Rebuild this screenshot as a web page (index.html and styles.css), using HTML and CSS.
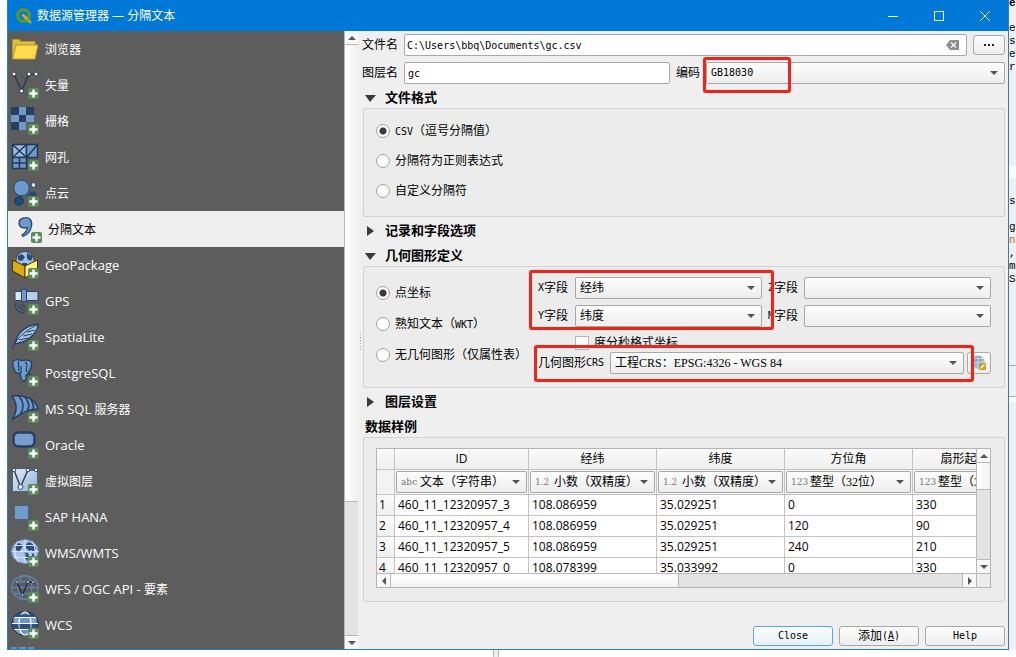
FILE: index.html
```html
<!DOCTYPE html>
<html lang="zh-CN">
<head>
<meta charset="utf-8">
<title>数据源管理器 — 分隔文本</title>
<link rel="stylesheet" href="styles.css">
</head>
<body>
<svg class="defs" aria-hidden="true">
  <defs>
    <linearGradient id="pale" x1="0" y1="0" x2="1" y2="1"><stop offset="0" stop-color="#e6edf5"/><stop offset="1" stop-color="#8fb0d6"/></linearGradient>
    <symbol id="plus" viewBox="0 0 11 11"><rect width="11" height="11" rx="2" fill="#588b58"/><path d="M5.5 1.5v8M1.500 5.500h8" stroke="#fff" stroke-width="2.400"/></symbol>
  </defs>
</svg>
<div class="desktop">
  <section class="window">
    <header class="titlebar">
      <svg class="logo" viewBox="0 0 16 16"><circle cx="7.500" cy="7.500" r="5.700" fill="none" stroke="#589632" stroke-width="3.400"/><path d="M9 9l6 6" stroke="#93b023" stroke-width="3"/><path d="M6.500 6.500l4 4" stroke="#ee9b3a" stroke-width="2.600"/></svg>
      <h1>数据源管理器 — 分隔文本</h1>
      <button class="winbtn" aria-label="最小化"><svg viewBox="0 0 10 10"><path d="M0 5.500h10"/></svg></button>
      <button class="winbtn" aria-label="最大化"><svg viewBox="0 0 10 10"><path d="M.5.5h9v9h-9z"/></svg></button>
      <button class="winbtn" aria-label="关闭"><svg viewBox="0 0 10 10"><path d="M0 0l10 10M10 0L0 10"/></svg></button>
    </header>
    <div class="content">
      <nav class="sidebar">
        <button class="item zh"><svg viewBox="0 0 28 28"><path d="M1.500 23V4.500h7l1.500 2h14v4" fill="#e0bd3a" stroke="#b8962a"/><path d="M1.500 24L5 10h22l-3 14z" fill="#ffda4f" stroke="#b8962a"/></svg><span>浏览器</span></button>
        <button class="item zh"><svg viewBox="0 0 28 28"><path d="M3 3l7.500 17L18 3h7" fill="none" stroke="#2b3c52" stroke-width="1.600"/><g fill="#fff" stroke="#2b3c52"><circle cx="3" cy="3" r="2"/><circle cx="10.500" cy="20" r="2"/><circle cx="18" cy="3" r="2"/><circle cx="25" cy="3" r="2"/></g><use href="#plus" x="17" y="17" width="11" height="11"/></svg><span>矢量</span></button>
        <button class="item zh"><svg viewBox="0 0 28 28"><path d="M0 0h23v23H0z" fill="#253f5c"/><path d="M8 0h7v8H8zM0 8h8v7H0zM15 8h8v7h-8zM8 15h7v8H8z" fill="#7098c8"/><path d="M15 15h8v8h-8z" fill="#5d5d5d"/><use href="#plus" x="17" y="17" width="11" height="11"/></svg><span>栅格</span></button>
        <button class="item zh"><svg viewBox="0 0 28 28"><g stroke="#1e3a59" stroke-width="1.500"><path d="M1.500 1.500h14v13h-14z" fill="#9dbbe0"/><path d="M15.500 1.500h11v13h-11z" fill="#7098c8"/><path d="M1.500 14.500h14v11h-14zM1.500 20h14M8.500 14.500v11" fill="#7098c8"/><path d="M1.500 1.500l14 13m0-13l-14 13m14 0L26.500 1.500" fill="none"/></g><use href="#plus" x="17" y="17" width="11" height="11"/></svg><span>网孔</span></button>
        <button class="item zh"><svg viewBox="0 0 28 28"><circle cx="10.500" cy="9" r="7.800" fill="#6e99cd" stroke="#294669"/><circle cx="22.500" cy="6" r="2.400" fill="#d7e3f0" stroke="#294669"/><circle cx="8" cy="22" r="4.300" fill="#254977" stroke="#1b3558"/><circle cx="21.500" cy="17" r="4.500" fill="#254977"/><use href="#plus" x="17" y="17" width="11" height="11"/></svg><span>点云</span></button>
        <button class="item zh selected"><svg viewBox="0 0 28 28"><path d="M10 3c5-1.500 8.500 2 7.500 8-.8 5-4 8.500-8.500 10.500l-1-1.500c3-2 5-4.500 5.500-7.500C9 14 5 12 5 8c0-2.500 2-4.500 5-5z" fill="#6e99cd" stroke="#294669" stroke-width="1.300"/><use href="#plus" x="17" y="17" width="11" height="11"/></svg><span>分隔文本</span></button>
        <button class="item"><svg viewBox="0 0 28 28"><path d="M14 3L26.500 8v12L14 27 1.500 20V8z" fill="#8a6a08"/><circle cx="14" cy="9.500" r="9" fill="#a5c2e6" stroke="#294669"/><path d="M7 5l4-2 3 3-3 4-4-1zM16 2l6 3-2 5-4-2zM11 12h5v4h-4z" fill="#254977"/><path d="M1.500 9L14 15v12L1.500 20z" fill="#d9ab0f" stroke="#3d3204"/><path d="M26.500 9L14 15v12l12.500-7z" fill="#fdf37d" stroke="#3d3204"/><use href="#plus" x="17" y="17" width="11" height="11"/></svg><span>GeoPackage</span></button>
        <button class="item"><svg viewBox="0 0 28 28"><g stroke="#294669"><path d="M4 4.500h8v9H4z" fill="#dce7f4"/><path d="M15 4.500h12v9H15z" fill="#b5cdea"/><path d="M10.500 2.500h5v12h-5z" fill="#6e99cd"/></g><path d="M3.500 16c0 6 3.500 9.500 10 10M7 16c.5 4 3 6.500 7 7M10.500 16c.5 2 1.500 3.500 4 4" fill="none" stroke="#34486a" stroke-width="1.400"/><use href="#plus" x="17" y="17" width="11" height="11"/></svg><span>GPS</span></button>
        <button class="item"><svg viewBox="0 0 28 28"><path d="M4 21C6 10 15 2 27 1c0 8-9 17-19 19z" fill="#a9c4e4" stroke="#203f63" stroke-width="1.300"/><path d="M1 27c2-8 10-18 25-25M8 17l9-2M12 13l9-2M16 9l8-2" fill="none" stroke="#203f63"/><use href="#plus" x="17" y="17" width="11" height="11"/></svg><span>SpatiaLite</span></button>
        <button class="item"><svg viewBox="0 0 28 28"><path d="M3 1.500c4-2 6 0 7.500 0s7-1.500 9.500 1c1.500 4-1 9-3 11.500l2 1-4 1v4c-1 3-5 2-5-1l-1-5c-4 1-5-1-6-4-1.500-4-2-7 0-8.500z" fill="#6e99cd" stroke="#203f63" stroke-width="1.300"/><path d="M8 2c-2 3 1 6-.5 10M14.500 3c3 3 0 6 1 10M10 7v7" fill="none" stroke="#203f63" stroke-width="1.200"/><use href="#plus" x="17" y="17" width="11" height="11"/></svg><span>PostgreSQL</span></button>
        <button class="item"><svg viewBox="0 0 28 28"><path d="M1 1c12-1 24 2 26 13-10 0-17 4-26 11C7 16 6 8 1 1z" fill="#6e99cd" stroke="#203f63" stroke-width="1.400"/><path d="M8 1c5 6 5 13 1 19M14 2c4 5 5 10 2 14.500M20 5c2 3 3 7 2 9.500" fill="none" stroke="#203f63" stroke-width="1.600"/><use href="#plus" x="17" y="17" width="11" height="11"/></svg><span>MS SQL <small>服务器</small></span></button>
        <button class="item"><svg viewBox="0 0 28 28"><rect x="2.500" y="1.500" width="21" height="14" rx="5" fill="#7a9dd0" stroke="#253f66" stroke-width="2.400"/><use href="#plus" x="17" y="17" width="11" height="11"/></svg><span>Oracle</span></button>
        <button class="item zh"><svg viewBox="0 0 28 28"><path d="M1.500 1.500h25v23h-25z" fill="url(#pale)" stroke="#47627f"/><path d="M3 3l6.500 17L17 3h8" fill="none" stroke="#294669" stroke-width="1.500"/><g fill="#fff" stroke="#294669"><circle cx="3" cy="3" r="1.800"/><circle cx="9.500" cy="20" r="2.400"/><circle cx="17" cy="3" r="1.800"/><circle cx="25" cy="3" r="1.800"/></g><use href="#plus" x="17" y="17" width="11" height="11"/></svg><span>虚拟图层</span></button>
        <button class="item"><svg viewBox="0 0 28 28"><path d="M1 1h19v19H1z" fill="none" stroke="#465e7c" stroke-width="1.500" stroke-dasharray="2 2"/><path d="M4 3h13v13H4z" fill="#6e9ccf"/><use href="#plus" x="17" y="17" width="11" height="11"/></svg><span>SAP HANA</span></button>
        <button class="item"><svg viewBox="0 0 28 28"><ellipse cx="14" cy="12.500" rx="13.500" ry="12" fill="#a9c6e9" stroke="#5f82ac"/><path d="M3 8l4-4 3 1 2 2-2 3-2 3-3-2zM15 5l3-2 4 2 3 4-2 4-3-2-2 1-3-3zM13 13l4 1 1 3-2 5-2-2zM21 15l3-1-1 4-2 1z" fill="#2c4d77"/><path d="M.5 12.500h27M14 .5v24M7 2c-4 7-4 14 0 21M21 2c4 7 4 14 0 21M3 6.500h22M3 18.500h22" fill="none" stroke="#dce9f7" stroke-width=".9"/><use href="#plus" x="17" y="17" width="11" height="11"/></svg><span>WMS/WMTS</span></button>
        <button class="item"><svg viewBox="0 0 28 28"><g fill="none" stroke="#6184ad" stroke-width="1.300"><ellipse cx="14" cy="12.500" rx="13.200" ry="12"/><ellipse cx="14" cy="12.500" rx="7" ry="12"/><path d="M1 12.500h26M3 6.500h22M3 18.500h22"/></g><path d="M6 7l5.500 13L17 7h5" fill="none" stroke="#1e2d40" stroke-width="1.300"/><g fill="#dce7f4" stroke="#1e2d40" stroke-width=".8"><circle cx="6" cy="7" r="1.400"/><circle cx="11.500" cy="20" r="1.400"/><circle cx="17" cy="7" r="1.400"/><circle cx="22" cy="7" r="1.400"/></g><use href="#plus" x="17" y="17" width="11" height="11"/></svg><span>WFS / OGC API - <small>要素</small></span></button>
        <button class="item"><svg viewBox="0 0 28 28"><ellipse cx="14" cy="12.500" rx="13.200" ry="12" fill="#2d5080" stroke="#1b3556"/><path d="M2.500 7h23v5.500h-23zM3 18h22l-5 5H8z" fill="#7ba3d3"/><ellipse cx="14" cy="12.500" rx="6" ry="11.500" fill="#6d96c8" stroke="#fff" stroke-width="1.200"/><path d="M8.500 13h11v5h-11zM9.500 3.500h9l1 2.500h-11z" fill="#2d5080"/><path d="M1 12.500h26M3 6.500h22M3 18.500h22" stroke="#fff" stroke-width="1.200"/><use href="#plus" x="17" y="17" width="11" height="11"/></svg><span>WCS</span></button>
        <button class="item" aria-label="XYZ"><svg viewBox="0 0 28 28"><path d="M0 0h6v6H0zM8 0h7v6H8zM17 0h6v6h-6z" fill="#5b93cf"/></svg></button>
      </nav>
      <div class="vscroll side-scroll"><i class="up"></i><b></b><i class="down"></i></div>
      <form class="panel">
        <div class="row">
          <label for="file">文件名</label>
          <div class="clearable"><input id="file" class="field mono" value="C:\Users\bbq\Documents\gc.csv"><button type="button" aria-label="清除"><svg viewBox="0 0 13 10"><path d="M4 0h9v10H4L0 5z" fill="#8f8f8f"/><path d="M5 2.500l5 5m0-5l-5 5" stroke="#fff" stroke-width="1.200"/></svg></button></div>
          <button type="button" class="btn browse" aria-label="浏览"><i></i><i></i><i></i></button>
        </div>
        <div class="row names">
          <label for="layer">图层名</label>
          <input id="layer" class="field mono" value="gc">
          <label for="enc">编码</label>
          <div class="combo"><select id="enc" class="field mono"><option>GB18030</option></select><em class="mark mark-enc"></em></div>
        </div>

        <h2 class="open">文件格式</h2>
        <fieldset class="formats">
          <label><input type="radio" name="fmt" checked><span><span class="mono">CSV</span>（逗号分隔值）</span></label>
          <label><input type="radio" name="fmt">分隔符为正则表达式</label>
          <label><input type="radio" name="fmt">自定义分隔符</label>
        </fieldset>
        <h2>记录和字段选项</h2>
        <h2 class="open">几何图形定义</h2>
        <fieldset class="geometry">
          <div class="kinds">
            <label><input type="radio" name="geom" checked>点坐标</label>
            <label><input type="radio" name="geom"><span>熟知文本（<span class="mono">WKT</span>）</span></label>
            <label><input type="radio" name="geom">无几何图形（仅属性表）</label>
          </div>
          <div class="coords">
            <div class="axes">
              <label for="xf"><span class="mono">X</span>字段</label><div class="combo"><select id="xf" class="field"><option>经纬</option></select></div>
              <label for="zf"><span class="mono">Z</span>字段</label><div class="combo"><select id="zf" class="field"><option></option></select></div>
              <label for="yf"><span class="mono">Y</span>字段</label><div class="combo"><select id="yf" class="field"><option>纬度</option></select></div>
              <label for="mf"><span class="mono">M</span>字段</label><div class="combo"><select id="mf" class="field"><option></option></select></div>
              <em class="mark mark-xy"></em>
            </div>
            <label class="dms"><input type="checkbox">度分秒格式坐标</label>
            <div class="crs">
              <label for="crs">几何图形<span class="mono">CRS</span></label>
              <div class="combo"><select id="crs" class="field"><option>工程CRS：EPSG:4326 - WGS 84</option></select></div>
              <button type="button" class="btn" aria-label="选择CRS"><svg viewBox="0 0 16 16"><circle cx="7" cy="7" r="6.500" fill="#8fa3b5"/><path d="M.5 7h13A6.500 6.500 0 0 1 .5 7z" fill="#8dbfe8"/><path d="M1 7h13M7 .5v13M2 3.500h10M3.500 2c-2 4-2 7 0 10M10.500 2c2 4 2 7 0 10" fill="none" stroke="#d5dde5" stroke-width=".8"/><rect x="8" y="8" width="7" height="7" rx="1" fill="#c5a31c"/><path d="M9.500 13.500l4-4" stroke="#fff" stroke-width="1.500"/></svg></button>
              <em class="mark mark-crs"></em>
            </div>
          </div>
        </fieldset>
        <h2>图层设置</h2>
        <h2 class="plain">数据样例</h2>
        <fieldset class="sample">
          <div class="frame">
            <div class="viewport">
              <table>
                <colgroup><col class="c-num"><col class="c-id"><col><col><col><col></colgroup>
                <thead>
                  <tr><th></th><th>ID</th><th>经纬</th><th>纬度</th><th>方位角</th><th>扇形起始角度</th></tr>
                  <tr class="types"><th></th>
                    <td><div class="combo"><i>abc</i><select class="field" aria-label="ID 类型"><option>文本（字符串）</option></select></div></td>
                    <td><div class="combo"><i>1.2</i><select class="field" aria-label="经纬 类型"><option>小数（双精度）</option></select></div></td>
                    <td><div class="combo"><i>1.2</i><select class="field" aria-label="纬度 类型"><option>小数（双精度）</option></select></div></td>
                    <td><div class="combo"><i>123</i><select class="field" aria-label="方位角 类型"><option>整型（32位）</option></select></div></td>
                    <td><div class="combo"><i>123</i><select class="field" aria-label="扇形 类型"><option>整型（32位）</option></select></div></td></tr>
                </thead>
                <tbody>
                  <tr><th>1</th><td>460_11_12320957_3</td><td>108.086959</td><td>35.029251</td><td>0</td><td>330</td></tr>
                  <tr><th>2</th><td>460_11_12320957_4</td><td>108.086959</td><td>35.029251</td><td>120</td><td>90</td></tr>
                  <tr><th>3</th><td>460_11_12320957_5</td><td>108.086959</td><td>35.029251</td><td>240</td><td>210</td></tr>
                  <tr><th>4</th><td>460_11_12320957_0</td><td>108.078399</td><td>35.033992</td><td>0</td><td>330</td></tr>
                </tbody>
              </table>
            </div>
            <div class="vscroll"><i class="up"></i><b></b><i class="down"></i></div>
            <div class="hscroll"><i class="left"></i><b></b><i class="right"></i></div>
            <div class="corner"></div>
          </div>
        </fieldset>
        <footer>
          <button type="button" class="btn default mono">Close</button>
          <button type="button" class="btn">添加<span class="mono">(<u>A</u>)</span></button>
          <button type="button" class="btn mono">Help</button>
        </footer>
      </form>
    </div>
  </section>
  <aside class="behind"><p class="first">e</p><p class="code">
e:
s
e
r</p><p class="gap"></p><p class="code second">sI

g
<span>n</span>
,
m
S</p><p class="tab"></p><p class="rest"></p></aside>
</div>
<div class="below"><i></i></div>
</body>
</html>
```

FILE: styles.css
```css
* { box-sizing: border-box; }
body {
  margin: 0;
  height: 100vh;
  display: flex;
  flex-direction: column;
  overflow: hidden;
  background: #fff;
  color: #000;
  font: 12px/16px "Liberation Serif", "Noto Sans CJK SC", sans-serif;
}
.defs { position: absolute; width: 0; height: 0; }
button, input, select { font: inherit; color: inherit; margin: 0; }
button { padding: 0; }
h1, h2, p, fieldset { margin: 0; }
.mono, .field.mono { font-family: "DejaVu Sans Mono", "Liberation Mono", monospace; font-size: 10px; }

.desktop { flex: 1; min-height: 0; display: flex; padding-left: 7px; }
.window {
  flex: 1;
  min-width: 0;
  display: flex;
  flex-direction: column;
  border: 1px solid #2f7db8;
  border-top: 0;
  background: #efefef;
}
.titlebar {
  height: 31px;
  display: flex;
  align-items: center;
  padding-left: 8px;
  background: #0078d7;
  color: #fff;
}
.logo { width: 16px; height: 16px; margin-right: 5px; }
.titlebar h1 { flex: 1; font: 12px/16px "Open Sans", "Noto Sans CJK SC", sans-serif; }
.winbtn { width: 46px; height: 31px; border: 0; background: none; }
.winbtn svg { display: block; width: 10px; height: 10px; margin: auto; fill: none; stroke: #fff; overflow: visible; }

.content { flex: 1; min-height: 0; display: flex; }
.sidebar { flex: 0 0 336px; overflow: hidden; background: #5d5d5d; }
.item {
  display: flex;
  align-items: center;
  gap: 6px;
  width: 100%;
  height: 36px;
  padding-left: 3px;
  border: 0;
  background: none;
  color: #fff;
  font: 13px/20px "Open Sans", "Noto Sans CJK SC", sans-serif;
}
.item svg { width: 28px; height: 28px; }
.item small { font-size: 12px; }
.item.zh { font-size: 12px; }
.item.zh span { padding-top: 2px; }
.item.selected { padding-left: 6px; background: #efefef; color: #000; }

.vscroll, .hscroll { display: flex; background: #e3e3e3; }
.vscroll { flex-direction: column; width: 14px; border-left: 1px solid #b9b9b9; }
.hscroll { height: 14px; border-top: 1px solid #b9b9b9; }
.vscroll i, .hscroll i { flex: 0 0 14px; display: flex; align-items: center; justify-content: center; background: #f8f8f8; }
.vscroll i::before, .hscroll i::before { content: ""; border: 4px solid transparent; }
.vscroll .up { border-bottom: 1px solid #b9b9b9; }
.vscroll .down { border-top: 1px solid #b9b9b9; margin-top: auto; }
.up::before { border-top-width: 0 !important; border-bottom-color: #555 !important; }
.down::before { border-bottom-width: 0 !important; border-top-color: #555 !important; }
.left::before { border-left-width: 0 !important; border-right-color: #555 !important; }
.right::before { border-right-width: 0 !important; border-left-color: #555 !important; }
.hscroll .left { border-right: 1px solid #b9b9b9; }
.hscroll .right { border-left: 1px solid #b9b9b9; margin-left: auto; }
.vscroll b { height: 22%; border-bottom: 1px solid #b9b9b9; background: linear-gradient(90deg, #fff, #f0f0f0); }
.hscroll b { width: 48%; border-right: 1px solid #b9b9b9; background: linear-gradient(#fff, #f3f3f3); }
.vscroll.side-scroll b { height: 74%; }

.panel { position: relative; flex: 1; min-width: 0; display: flex; flex-direction: column; padding: 3px 3px 3px 4px; }
.panel::before {
  content: "";
  position: absolute;
  left: 2px;
  top: 49%;
  width: 1px;
  height: 16px;
  background: repeating-linear-gradient(#a8a8a8 0 1px, transparent 1px 3px);
}
.row { display: flex; align-items: center; gap: 6px; }
.row + .row { margin-top: 6px; }
.row.names { display: grid; grid-template-columns: auto 266fr auto 299fr; }
.field {
  width: 100%;
  min-width: 0;
  height: 22px;
  padding: 0 3px;
  border: 1px solid #a9a9a9;
  border-radius: 2px;
  background: #fff;
  outline: 0;
}
select.field { appearance: none; padding: 0 4px; background: linear-gradient(#fdfdfd, #ededed); }
.combo { position: relative; flex: 1; min-width: 0; display: flex; }
.combo::after {
  content: "";
  position: absolute;
  right: 7px;
  top: 9px;
  border: 4px solid transparent;
  border-top-color: #555;
  border-bottom: 0;
  pointer-events: none;
}
.clearable { position: relative; flex: 1; }
.clearable .field { display: block; padding: 0 24px 0 2px; }
.clearable button { position: absolute; right: 8px; top: 6px; border: 0; background: none; }
.clearable svg { display: block; width: 13px; height: 10px; }
.btn {
  display: flex;
  align-items: center;
  justify-content: center;
  border: 1px solid #a9a9a9;
  border-radius: 3px;
  background: linear-gradient(#fdfdfd, #ededed);
}
.browse { width: 32px; height: 20px; gap: 2px; }
.browse i { width: 2px; height: 2px; background: #222; }

h2 { display: flex; align-items: center; height: 20px; margin-top: 4px; padding-left: 3px; font-size: 13px; font-weight: 700; line-height: 20px; }
h2 + h2 { margin-top: 5px; }
h2::before { content: ""; width: 20px; height: 10px; background: #3a3a3a; clip-path: polygon(2px 0, 9px 5px, 2px 10px); }
h2.open::before { clip-path: polygon(0 2px, 11px 2px, 5px 9px); }
h2.plain::before { display: none; }
fieldset { min-width: 0; margin-left: 1px; padding: 10px 13px; border: 1px solid #d3d3d3; border-radius: 2px; background: #ececec; }
label { display: flex; align-items: center; white-space: nowrap; }
input[type="radio"] { appearance: none; width: 14px; height: 14px; margin-right: 5px; border: 1px solid #a0a0a0; border-radius: 50%; background: #fff; }
input[type="radio"]:checked { background: radial-gradient(circle, #3a3a3a 3px, #fff 4px); }
input[type="checkbox"] { appearance: none; width: 14px; height: 14px; margin-right: 5px; border: 1px solid #b5b5b5; background: #fff; }
.formats { display: grid; grid-auto-rows: 22px; gap: 8px; padding: 11px 12px 14px; }
.geometry { display: flex; padding: 10px 13px 13px 12px; }
.kinds { flex: 0 0 162px; display: grid; grid-auto-rows: 22px; gap: 9px; padding-top: 5px; }
.coords { flex: 1; min-width: 0; }
.axes { position: relative; display: grid; grid-template-columns: 31px 1fr 30px 1fr; gap: 6px; align-items: center; }
.dms { height: 14px; margin: 9px 0 2px 37px; }
.crs { position: relative; display: flex; align-items: center; }
.crs .combo { margin: 0 3px 0 6px; }
.crs .btn { width: 24px; height: 22px; }
.crs svg { width: 16px; height: 16px; }
.mark { position: absolute; border: 3px solid #e22a20; border-radius: 3px; box-shadow: 0 0 1px #ff8078, inset 0 0 1px #ff8078; pointer-events: none; }
.mark-enc { left: -3px; top: -5px; width: 88px; height: 36px; }
.mark-xy { left: -9px; top: -7px; right: 217px; bottom: -3px; }
.mark-crs { left: -4px; right: 17px; top: -7px; bottom: -8px; }

.sample { flex: 1; min-height: 0; display: flex; padding: 10px 13px 13px 12px; }
.frame { flex: 1; min-width: 0; display: grid; grid-template: minmax(0, 1fr) 14px / minmax(0, 1fr) 14px; border: 1px solid #b5b5b5; background: #fff; }
.viewport { overflow: hidden; }
.corner { border-top: 1px solid #b9b9b9; border-left: 1px solid #b9b9b9; background: #ededed; }
table { width: 664px; table-layout: fixed; border-collapse: separate; border-spacing: 0; font: 12px/18px "Open Sans", "Noto Sans CJK SC", sans-serif; }
col { width: 128px; }
.c-num { width: 18px; }
.c-id { width: 134px; }
th, td { height: 21px; padding: 0 3px; border-right: 1px solid #c4c4c4; border-bottom: 1px solid #c4c4c4; font-weight: 400; text-align: left; white-space: nowrap; overflow: hidden; }
th { padding: 0 2px; background: linear-gradient(#fbfbfb, #efefef); }
thead th { text-align: center; }
.types th, .types td { height: 25px; padding: 0 1px; background: #f3f3f3; }
.types .field { padding: 0 20px 0 23px; font-family: "Liberation Serif", "Noto Sans CJK SC", sans-serif; }
.types .combo i { position: absolute; left: 5px; top: 3px; color: #777; font: 9px/16px "DejaVu Serif", serif; }

footer { display: flex; justify-content: flex-end; gap: 6px; margin-top: 24px; }
footer .btn { width: 80px; height: 20px; }
.btn.default { border-color: #5aa9dd; background: linear-gradient(#fcfeff, #e8f0f6); }

.behind { flex: 0 0 7px; overflow: hidden; background: #f0f0f0; font: 11px/13px "Liberation Mono", monospace; }
.behind .first { height: 9px; line-height: 6px; font-weight: 700; }
.behind .code { white-space: pre; }
.behind .gap { height: 12px; margin-top: 92px; background: #fff; }
.behind .second { margin-top: 17px; }
.behind span { color: #c06a1a; }
.behind .tab { height: 32px; margin-top: 79px; border-top: 1px solid #aaa; border-bottom: 1px solid #aaa; }
.behind .rest { height: 5px; background: #fff; }
.below { flex: 0 0 7px; display: flex; }
.below i { width: 6px; margin-left: 493px; border: solid #bbb; border-width: 0 1px; background: #eee; }
```
